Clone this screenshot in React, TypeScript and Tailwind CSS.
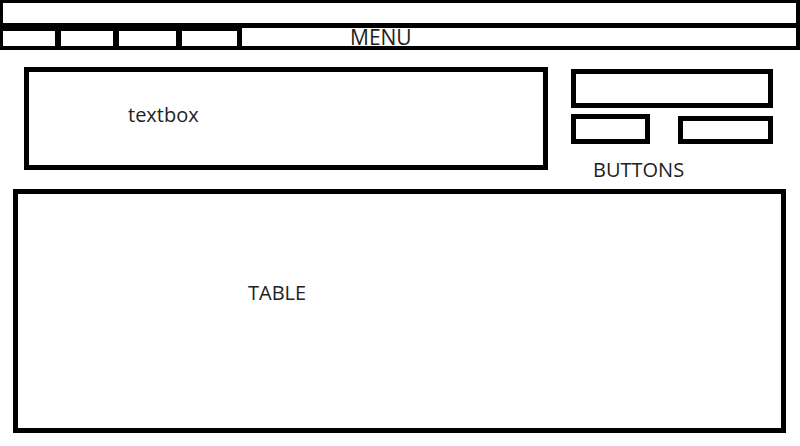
const tabs = [
  { w: "w-[58px]", b: "border-r-[6px]" },
  { w: "w-[58px]", b: "border-r-[6px]" },
  { w: "w-[63px]", b: "border-r-[6px]" },
  { w: "w-[60px]", b: "border-r-[5px]" },
];

function Header() {
  return (
    <div className="h-[50px] flex flex-col border-black border-t-[3px] border-l-[3px] border-r-[4px] border-b-[4px]">
      <div className="h-[20px]" />
      <div className="h-[5px] bg-black" />
      <div className="flex h-[18px]">
        {tabs.map((t, i) => (
          <div key={i} className={`${t.w} ${t.b} h-full border-t-[3px] border-black`} />
        ))}
        <div className="flex-1 pl-[108px]">
          <span className="block text-[21px] leading-[18px] text-[#222]">MENU</span>
        </div>
      </div>
    </div>
  );
}

function ButtonsPanel() {
  return (
    <div className="w-[202px] mt-[2px] flex flex-col">
      <div className="h-[39px] border-[5px] border-black" />
      <div className="flex items-end mt-[6px]">
        <div className="w-[79px] h-[30px] border-[5px] border-black" />
        <div className="w-[95px] h-[28px] ml-[28px] border-[5px] border-black" />
      </div>
      <div className="mt-[12px] pl-[22px] text-[20px] leading-[27px] text-[#222]">BUTTONS</div>
    </div>
  );
}

export default function App() {
  return (
    <div className="w-[800px] h-[446px] bg-white overflow-hidden font-['Open_Sans',sans-serif]">
      <Header />
      <div className="flex items-start h-[103px] mt-[17px] ml-[24px]">
        <div className="w-[524px] h-[103px] border-[5px] border-black pl-[99px] pt-[29px]">
          <span className="block text-[20px] leading-[27px] text-[#222]">textbox</span>
        </div>
        <div className="ml-[23px]">
          <ButtonsPanel />
        </div>
      </div>
      <div className="mt-[19px] ml-[13px] w-[773px] h-[244px] border-[5px] border-black pl-[230px] pt-[85px]">
        <span className="block text-[20px] leading-[27px] text-[#222]">TABLE</span>
      </div>
    </div>
  );
}
